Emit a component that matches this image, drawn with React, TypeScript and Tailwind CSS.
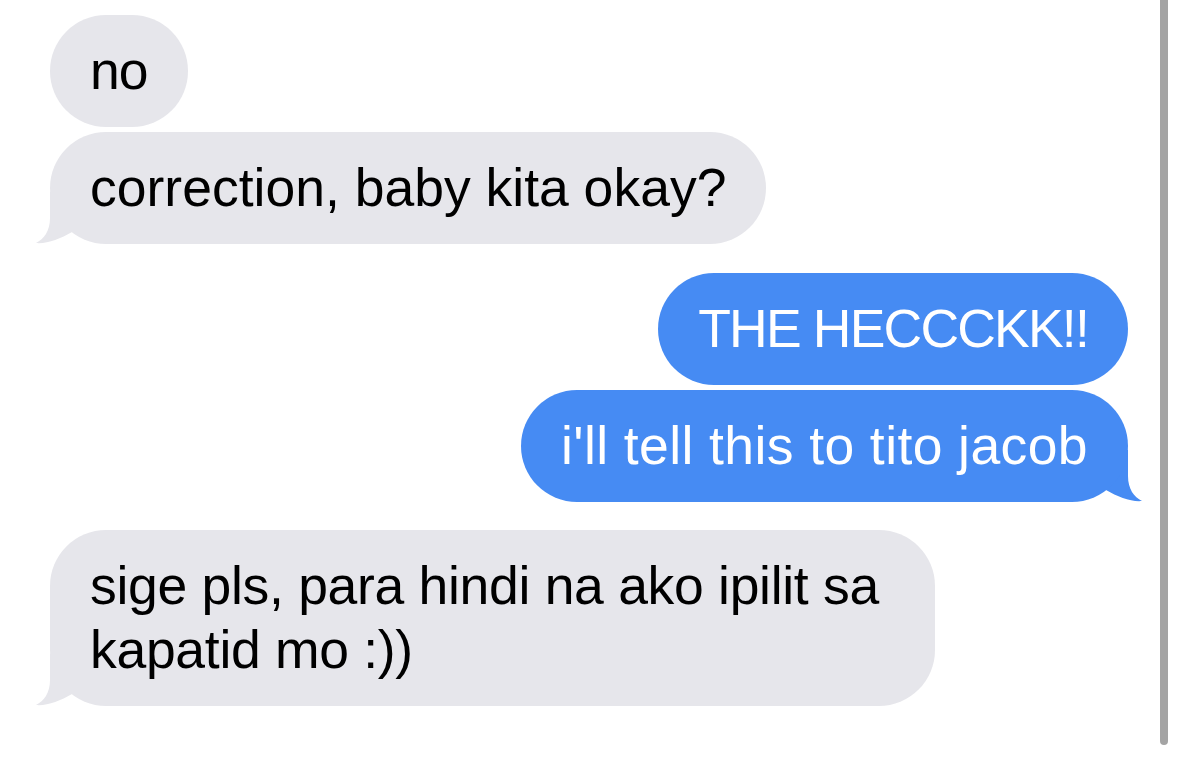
import React from 'react';

type Side = 'left' | 'right';

interface Msg {
  text: string;
  side: Side;
  tail?: boolean;
  gapTop: string;
  tracking: string;
}

const messages: Msg[] = [
  { text: 'no', side: 'left', gapTop: 'mt-0', tracking: 'tracking-[-1px]' },
  { text: 'correction, baby kita okay?', side: 'left', tail: true, gapTop: 'mt-[5px]', tracking: 'tracking-normal' },
  { text: 'THE HECCCKK!!', side: 'right', gapTop: 'mt-[29px]', tracking: 'tracking-[-1.8px]' },
  { text: "i'll tell this to tito jacob", side: 'right', tail: true, gapTop: 'mt-[5px]', tracking: 'tracking-[0.4px]' },
  {
    text: 'sige pls, para hindi na ako ipilit sa kapatid mo :))',
    side: 'left',
    tail: true,
    gapTop: 'mt-[28px]',
    tracking: 'tracking-[-0.3px]',
  },
];

const Tail = ({ side, color }: { side: Side; color: string }) => (
  <svg
    width="66"
    height="52"
    viewBox="-16 -51 66 52"
    className={
      side === 'left'
        ? 'absolute bottom-0 left-[-16px]'
        : 'absolute bottom-0 right-[-16px] -scale-x-100'
    }
  >
    <path
      d="M0 -51 L0 -25 C0 -12 -6 -4 -14 0 C-3 1 10 -4 22 -11 L40 -20 L40 -51 Z"
      fill={color}
    />
  </svg>
);

const Bubble = ({ msg }: { msg: Msg }) => {
  const left = msg.side === 'left';
  const color = left ? '#e6e6eb' : '#468bf3';
  return (
    <div className={`flex ${left ? 'justify-start' : 'justify-end'} ${msg.gapTop}`}>
      <div className="relative max-w-[885px]">
        {msg.tail && <Tail side={msg.side} color={color} />}
        <div
          className={`relative rounded-[56px] px-[40px] py-[24px] text-[53.5px] leading-[64px] ${msg.tracking} ${
            left ? 'bg-[#e6e6eb] text-black' : 'bg-[#468bf3] text-white'
          }`}
        >
          {msg.text}
        </div>
      </div>
    </div>
  );
};

export default function App() {
  return (
    <div className="relative h-[760px] w-[1179px] overflow-hidden bg-white font-['Liberation_Sans',Arial,sans-serif]">
      <div className="flex flex-col pl-[50px] pr-[51px] pt-[15px]">
        {messages.map((m, i) => (
          <Bubble key={i} msg={m} />
        ))}
      </div>
      <div className="absolute right-[11px] top-0 h-[745px] w-[8px] rounded-b-full bg-[#a4a4a4]" />
    </div>
  );
}
